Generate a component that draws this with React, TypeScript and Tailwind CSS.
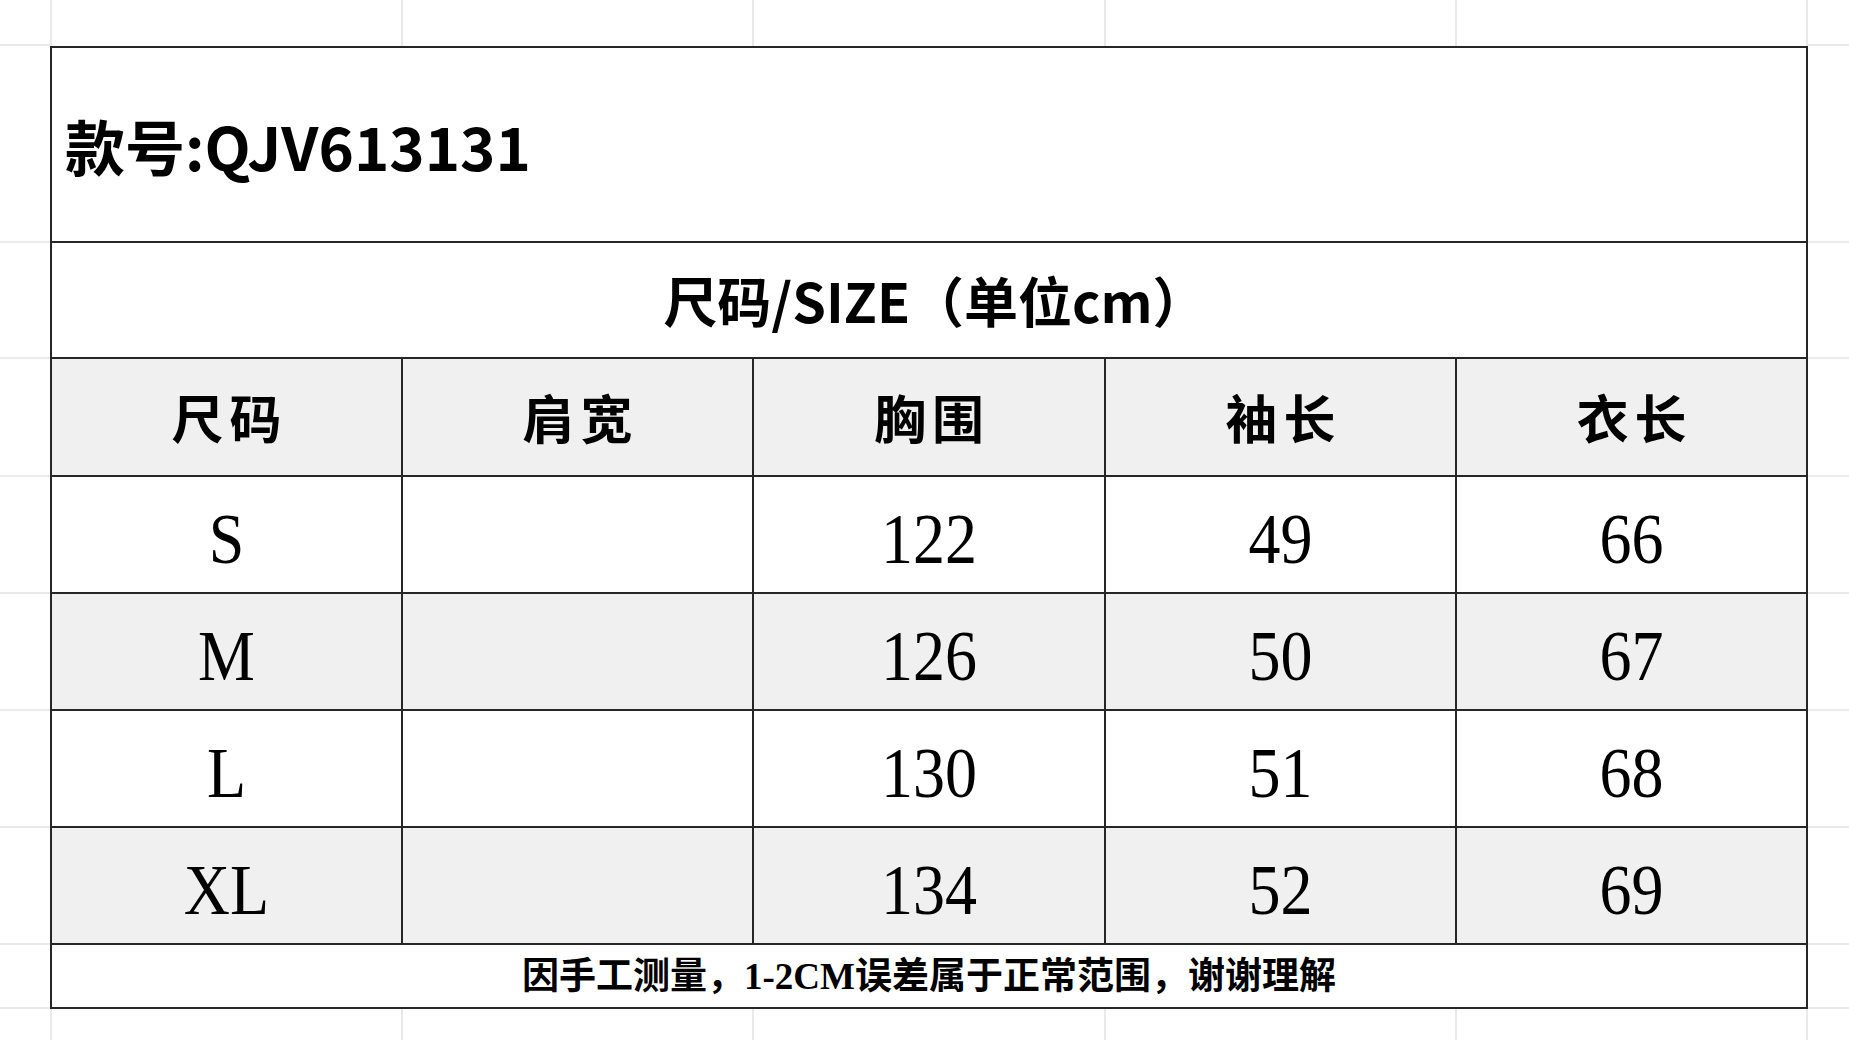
// 尺码表 — spreadsheet screenshot of a size chart

const grid = "border-[#e9e9e9]";
const line = "border-[#262626]";

const sans = "font-['Noto_Sans_CJK_SC',sans-serif]";
const serif = "font-['Liberation_Serif','Noto_Sans_CJK_SC',serif]";

const headers = ["尺码", "肩宽", "胸围", "袖长", "衣长"];

const rows = [
  { size: "S", shoulder: "", chest: "122", sleeve: "49", length: "66", gray: false },
  { size: "M", shoulder: "", chest: "126", sleeve: "50", length: "67", gray: true },
  { size: "L", shoulder: "", chest: "130", sleeve: "51", length: "68", gray: false },
  { size: "XL", shoulder: "", chest: "134", sleeve: "52", length: "69", gray: true },
];

// margin row below the table: only the sheet's light column lines
function MarginRow({ className }: { className: string }) {
  return (
    <div className={`flex ${className}`}>
      <div className={`w-[52px] border-r-2 ${grid}`} />
      <div className={`w-[351px] border-r-2 ${grid}`} />
      <div className={`w-[351px] border-r-2 ${grid}`} />
      <div className={`w-[352px] border-r-2 ${grid}`} />
      <div className={`w-[351px] border-r-2 ${grid}`} />
      <div className={`w-[351px] border-r-2 ${grid}`} />
      <div className="flex-1" />
    </div>
  );
}

// side margins: light row lines lined up with the table rows
function SideGrid({ className }: { className: string }) {
  const heights = ["h-[197px]", "h-[116px]", "h-[118px]", "h-[117px]", "h-[117px]", "h-[117px]", "h-[117px]", "h-[64px]"];
  return (
    <div className={`flex flex-col ${className}`}>
      {heights.map((h, i) => (
        <div key={i} className={`${h} border-b-2 ${grid}`} />
      ))}
    </div>
  );
}

function Cell({ children, last }: { children?: React.ReactNode; last?: boolean }) {
  return (
    <div className={`flex items-center justify-center ${last ? "" : `border-r-2 ${line}`}`}>
      {children}
    </div>
  );
}

function Num({ children }: { children: React.ReactNode }) {
  return (
    <span className={`inline-block mt-[8px] ${serif} text-[64px] leading-none text-black scale-y-[1.12]`}>
      {children}
    </span>
  );
}

export default function App() {
  return (
    <div className="w-[1849px] h-[1040px] bg-white flex flex-col overflow-hidden">
      <div className="flex h-[46px]">
        <div className={`w-[52px] border-r-2 border-b-2 ${grid}`} />
        <div className={`w-[351px] border-r-2 ${grid}`} />
        <div className={`w-[351px] border-r-2 ${grid}`} />
        <div className={`w-[352px] border-r-2 ${grid}`} />
        <div className={`w-[351px] border-r-2 ${grid}`} />
        <div className={`w-[351px] border-r-2 ${grid}`} />
        <div className={`flex-1 border-b-2 ${grid}`} />
      </div>

      <div className="flex h-[963px]">
        <SideGrid className="w-[50px]" />

        <div className={`w-[1758px] border-2 ${line} flex flex-col`}>
          {/* 款号 */}
          <div className={`h-[195px] border-b-2 ${line} flex items-center pl-[13px]`}>
            <span className={`${sans} font-bold text-[60px] leading-none text-black`}>
              款号:QJV613131
            </span>
          </div>

          {/* 尺码/SIZE */}
          <div className={`h-[116px] border-b-2 ${line} flex items-center justify-center pl-[12px]`}>
            <span className={`${sans} font-bold text-[54px] leading-none text-black`}>
              尺码/SIZE（单位cm）
            </span>
          </div>

          {/* column headers */}
          <div
            className={`h-[118px] border-b-2 ${line} bg-[#f0f0f0] grid grid-cols-[351px_351px_352px_351px_1fr]`}
          >
            {headers.map((h, i) => (
              <Cell key={h} last={i === headers.length - 1}>
                <span className={`${sans} font-bold text-[52px] leading-none text-black tracking-[6px] pl-[6px]`}>
                  {h}
                </span>
              </Cell>
            ))}
          </div>

          {rows.map((r) => (
            <div
              key={r.size}
              className={`h-[117px] border-b-2 ${line} ${r.gray ? "bg-[#f0f0f0]" : "bg-white"} grid grid-cols-[351px_351px_352px_351px_1fr]`}
            >
              <Cell>
                <Num>{r.size}</Num>
              </Cell>
              <Cell>{r.shoulder && <Num>{r.shoulder}</Num>}</Cell>
              <Cell>
                <Num>{r.chest}</Num>
              </Cell>
              <Cell>
                <Num>{r.sleeve}</Num>
              </Cell>
              <Cell last>
                <Num>{r.length}</Num>
              </Cell>
            </div>
          ))}

          {/* footnote */}
          <div className="flex-1 flex items-center justify-center">
            <span className={`${serif} font-bold text-[37px] leading-none text-black`}>
              因手工测量，1-2CM误差属于正常范围，谢谢理解
            </span>
          </div>
        </div>

        <SideGrid className="flex-1" />
      </div>

      <MarginRow className="flex-1" />
    </div>
  );
}
